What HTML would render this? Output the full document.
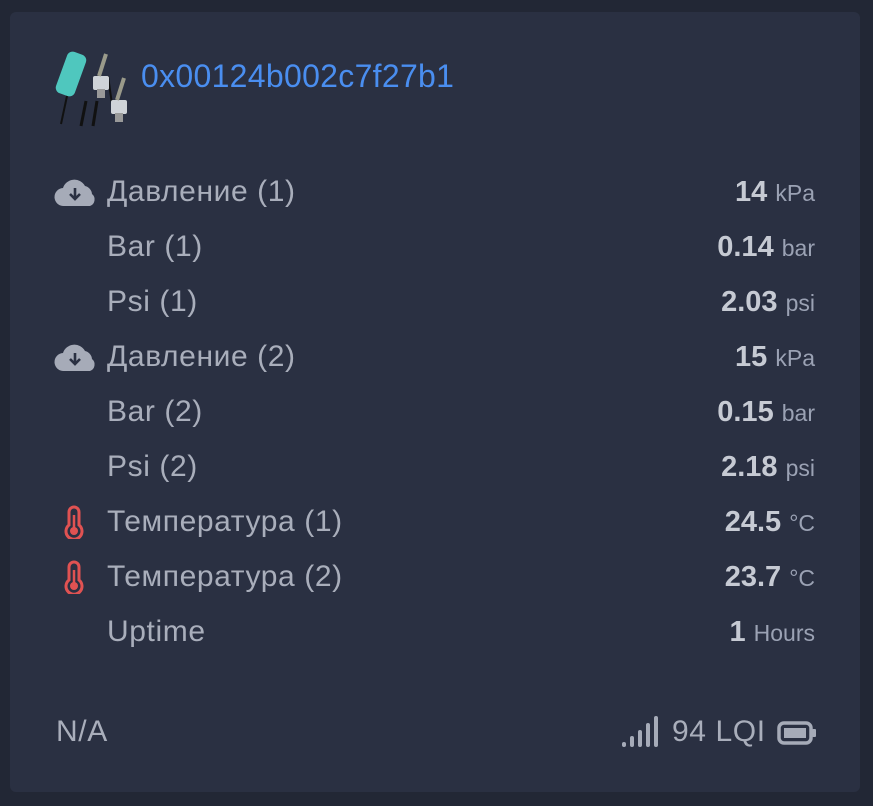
<!DOCTYPE html>
<html><head><meta charset="utf-8"><style>
body{margin:0;width:873px;height:806px;background:#222735;font-family:"Liberation Sans","DejaVu Sans",sans-serif;overflow:hidden}
.card{position:absolute;left:10px;top:12px;width:850px;height:780px;background:#2a3042;border-radius:6px}
.title{position:absolute;left:131px;top:46px;font-size:32px;color:#4a8ef0;letter-spacing:0.3px}
.row{position:absolute;left:0;width:850px;height:40px}
.lbl{position:absolute;left:97px;top:0;line-height:40px;font-size:30px;color:#a9aebb;letter-spacing:0.6px}
.val{position:absolute;right:45px;top:0;line-height:40px;font-size:29px;font-weight:bold;color:#c6cad3}
.val span{font-weight:normal;font-size:23px;color:#9ba2b4}
.ic{position:absolute;left:44px;top:7px}
</style></head><body>
<div class="card">
<svg style="position:absolute;left:43px;top:34px" width="75" height="82" viewBox="0 0 75 82">
<g transform="rotate(20 18 28)"><rect x="8" y="6" width="20" height="44" rx="6" fill="#4fc7be"/></g>
<line x1="14" y1="50" x2="8" y2="78" stroke="#111" stroke-width="2"/>
<line x1="33" y1="55" x2="28" y2="80" stroke="#111" stroke-width="3"/>
<line x1="44" y1="55" x2="40" y2="80" stroke="#111" stroke-width="3"/>
<line x1="55" y1="30" x2="59" y2="58" stroke="#111" stroke-width="2"/>
<rect x="40" y="30" width="16" height="14" rx="2" fill="#cfd3d8"/><rect x="44" y="43" width="8" height="9" fill="#999"/>
<rect x="58" y="54" width="16" height="14" rx="2" fill="#cfd3d8"/><rect x="62" y="67" width="8" height="9" fill="#999"/>
<line x1="46" y1="30" x2="53" y2="8" stroke="#9a9a8a" stroke-width="4"/>
<line x1="64" y1="54" x2="71" y2="32" stroke="#9a9a8a" stroke-width="4"/>
</svg>
<div class="title">0x00124b002c7f27b1</div>

<div class="row" style="top:160px"><svg class="ic" width="44" height="28" viewBox="0 0 44 28"><path d="M10 27a9 9 0 0 1-1-18 12 12 0 0 1 22-2 9 9 0 0 1 7 8 7 7 0 0 1-2 12z" fill="#a6abb8"/><path d="M21 9v11M16 15l5 5 5-5" stroke="#2a3042" stroke-width="2.6" fill="none"/></svg><div class="lbl">Давление (1)</div><div class="val">14 <span>kPa</span></div></div>
<div class="row" style="top:215px"><div class="lbl">Bar (1)</div><div class="val">0.14 <span>bar</span></div></div>
<div class="row" style="top:270px"><div class="lbl">Psi (1)</div><div class="val">2.03 <span>psi</span></div></div>
<div class="row" style="top:325px"><svg class="ic" width="44" height="28" viewBox="0 0 44 28"><path d="M10 27a9 9 0 0 1-1-18 12 12 0 0 1 22-2 9 9 0 0 1 7 8 7 7 0 0 1-2 12z" fill="#a6abb8"/><path d="M21 9v11M16 15l5 5 5-5" stroke="#2a3042" stroke-width="2.6" fill="none"/></svg><div class="lbl">Давление (2)</div><div class="val">15 <span>kPa</span></div></div>
<div class="row" style="top:380px"><div class="lbl">Bar (2)</div><div class="val">0.15 <span>bar</span></div></div>
<div class="row" style="top:435px"><div class="lbl">Psi (2)</div><div class="val">2.18 <span>psi</span></div></div>
<div class="row" style="top:490px"><svg class="ic" style="left:54px;top:3px" width="20" height="34" viewBox="0 0 20 34"><path d="M10 2a5 5 0 0 1 5 5v13a8 8 0 1 1-10 0V7a5 5 0 0 1 5-5z" fill="none" stroke="#e05252" stroke-width="3"/><circle cx="10" cy="26" r="4" fill="#e05252"/><line x1="10" y1="10" x2="10" y2="24" stroke="#e05252" stroke-width="2.5"/></svg><div class="lbl">Температура (1)</div><div class="val">24.5 <span>°C</span></div></div>
<div class="row" style="top:545px"><svg class="ic" style="left:54px;top:3px" width="20" height="34" viewBox="0 0 20 34"><path d="M10 2a5 5 0 0 1 5 5v13a8 8 0 1 1-10 0V7a5 5 0 0 1 5-5z" fill="none" stroke="#e05252" stroke-width="3"/><circle cx="10" cy="26" r="4" fill="#e05252"/><line x1="10" y1="10" x2="10" y2="24" stroke="#e05252" stroke-width="2.5"/></svg><div class="lbl">Температура (2)</div><div class="val">23.7 <span>°C</span></div></div>
<div class="row" style="top:600px"><div class="lbl">Uptime</div><div class="val">1 <span>Hours</span></div></div>

<div class="row" style="top:700px"><div class="lbl" style="left:46px">N/A</div>
<svg style="position:absolute;left:612px;top:3px" width="40" height="32" viewBox="0 0 40 32"><g stroke="#a6abb8" stroke-width="4" stroke-linecap="round"><line x1="2" y1="30" x2="2" y2="29"/><line x1="10" y1="30" x2="10" y2="23"/><line x1="18" y1="30" x2="18" y2="17"/><line x1="26" y1="30" x2="26" y2="10"/><line x1="34" y1="30" x2="34" y2="3"/></g></svg>
<div class="lbl" style="left:662px">94 LQI</div>
<svg style="position:absolute;left:767px;top:9px" width="40" height="24" viewBox="0 0 40 24"><rect x="2" y="2" width="32" height="20" rx="5" fill="none" stroke="#a6abb8" stroke-width="3.5"/><rect x="7" y="7" width="22" height="10" fill="#a6abb8"/><rect x="35" y="8" width="4" height="8" rx="1" fill="#a6abb8"/></svg>
</div>
</div>
</body></html>
